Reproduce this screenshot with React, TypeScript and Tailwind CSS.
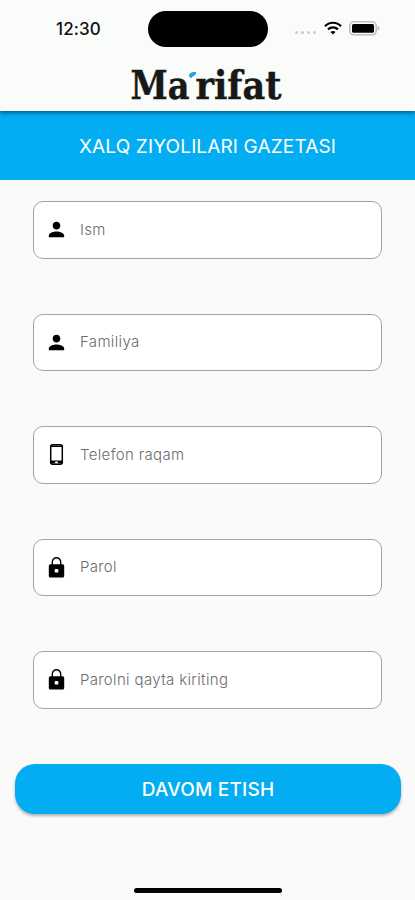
import { MdPerson } from 'react-icons/md';
import type { ReactNode } from 'react';

const StatusBar = (): JSX.Element => {
    return (
        <div className="flex h-[54px] pt-[11px] items-start">
            <div className="w-[148px] pl-[56px] pt-[7px] text-[17px] leading-[22px] font-medium tracking-[0.1px] text-[#111]">
                12:30
            </div>
            <div className="w-[120px] h-[36px] rounded-full bg-black" />
            <div className="flex pl-[27px] pt-[9px]">
                <div className="flex gap-[3px] pt-[11px]">
                    <div className="w-[3px] h-[3px] rounded-full bg-[#c9cbc9]" />
                    <div className="w-[3px] h-[3px] rounded-full bg-[#c9cbc9]" />
                    <div className="w-[3px] h-[3px] rounded-full bg-[#c9cbc9]" />
                    <div className="w-[3px] h-[3px] rounded-full bg-[#c9cbc9]" />
                </div>
                <svg className="ml-[8px] mt-[1px]" width="18" height="14" viewBox="0 0 18 14" fill="none" stroke="#000" strokeWidth="2.2">
                    <path d="M0.9 5.2 C5.3 0.6 12.7 0.6 17.1 5.2" />
                    <path d="M4 8.4 C6.9 5.6 11.1 5.6 14 8.4" />
                    <path d="M9 13.6 L6.5 11 C7.9 9.7 10.1 9.7 11.5 11 Z" fill="#000" stroke="none" />
                </svg>
                <svg className="ml-[7px] mt-[1px]" width="32" height="15" viewBox="0 0 32 15">
                    <rect x="0.8" y="0.8" width="26.4" height="13" rx="4" fill="#fafcfa" stroke="#bcbebc" strokeWidth="1.6" />
                    <rect x="3" y="3" width="22" height="8.8" rx="1.5" fill="#000" />
                    <path d="M28.6 5 C31.2 5.8 31.2 8.8 28.6 9.6 Z" fill="#bcbebc" />
                </svg>
            </div>
        </div>
    );
};

const Logo = (): JSX.Element => {
    return (
        <svg className="mx-auto block overflow-visible" width="155" height="56" viewBox="0 0 155 56" fill="#181818">
            <text x="0.5" y="44.5" textLength="59" lengthAdjust="spacingAndGlyphs" stroke="#181818" strokeWidth="0.4" className="[font-family:'DejaVu_Serif',serif] font-bold text-[38.5px]">
                Ma
            </text>
            <path d="M59 22.5 C58.7 19.5 61.5 17.5 66.3 18.2 C66.3 21.5 63 21.3 61.3 24.2 Z" fill="#1ba5e0" />
            <text x="65.5" y="44.5" textLength="86" lengthAdjust="spacingAndGlyphs" stroke="#181818" strokeWidth="0.4" className="[font-family:'DejaVu_Serif',serif] font-bold text-[38.5px]">
                rifat
            </text>
        </svg>
    );
};

const PhoneIcon = (): JSX.Element => {
    return (
        <svg width="23" height="23" viewBox="0 0 23 23">
            <rect x="5.7" y="1.7" width="11.6" height="19.6" rx="2" fill="#fff" stroke="#000" strokeWidth="1.5" />
            <path d="M5.5 2.5 H17.5 V4 H5.5 Z M5.5 17.6 H17.5 V20.5 H5.5 Z" />
            <rect x="10" y="18.4" width="3" height="1.8" rx="0.8" fill="#fff" />
        </svg>
    );
};

const LockIcon = (): JSX.Element => {
    return (
        <svg width="23" height="23" viewBox="0 0 23 23">
            <path d="M7.3 9.5 V6 A4.2 4.2 0 0 1 15.7 6 V9.5" fill="none" stroke="#000" strokeWidth="1.4" />
            <rect x="3.8" y="8.3" width="15.4" height="13.2" rx="1.6" />
            <rect x="9.7" y="13" width="3.6" height="3.6" rx="0.9" fill="#fff" />
        </svg>
    );
};

const Field = ({ icon, label, type = 'text' }: { icon: ReactNode; label: string; type?: string }): JSX.Element => {
    return (
        <label className="flex items-center w-[349px] h-[57.5px] pl-[11px] bg-white border border-[#a3a3a3] rounded-[10px]">
            {icon}
            <input
                type={type}
                placeholder={label}
                className="ml-[12px] w-[260px] outline-none text-[15px] font-light tracking-[0.35px] text-[#222] placeholder:text-[#6c6c6c]"
            />
        </label>
    );
};

export default function App(): JSX.Element {
    return (
        <div className="flex flex-col w-[415px] h-[900px] bg-[#fafafa] overflow-hidden [font-family:Inter,sans-serif]">
            <div className="relative h-[111px] shrink-0 bg-[#fafcfa] shadow-[0_2px_4px_rgba(0,0,0,0.45)]">
                <StatusBar />
                <Logo />
            </div>
            <div className="flex items-center justify-center h-[69px] pt-[4px] shrink-0 bg-[#03adf2] text-white text-[19px] tracking-[0.14px]">
                XALQ ZIYOLILARI GAZETASI
            </div>
            <div className="flex flex-col items-center gap-[55px] pt-[21px]">
                <Field icon={<MdPerson size={23} />} label="Ism" />
                <Field icon={<MdPerson size={23} />} label="Familiya" />
                <Field icon={<PhoneIcon />} label="Telefon raqam" type="tel" />
                <Field icon={<LockIcon />} label="Parol" type="password" />
                <Field icon={<LockIcon />} label="Parolni qayta kiriting" type="password" />
            </div>
            <button className="mt-[55.5px] ml-[15px] w-[386px] h-[50px] pt-[2px] shrink-0 rounded-[20px] bg-[#03adf2] text-white text-[19px] font-medium tracking-[0.2px] shadow-[0_2px_3px_rgba(0,0,0,0.3)]">
                DAVOM ETISH
            </button>
            <div className="mt-auto mb-[7.5px] mx-auto w-[148px] h-[4.5px] shrink-0 rounded-full bg-black" />
        </div>
    );
}
